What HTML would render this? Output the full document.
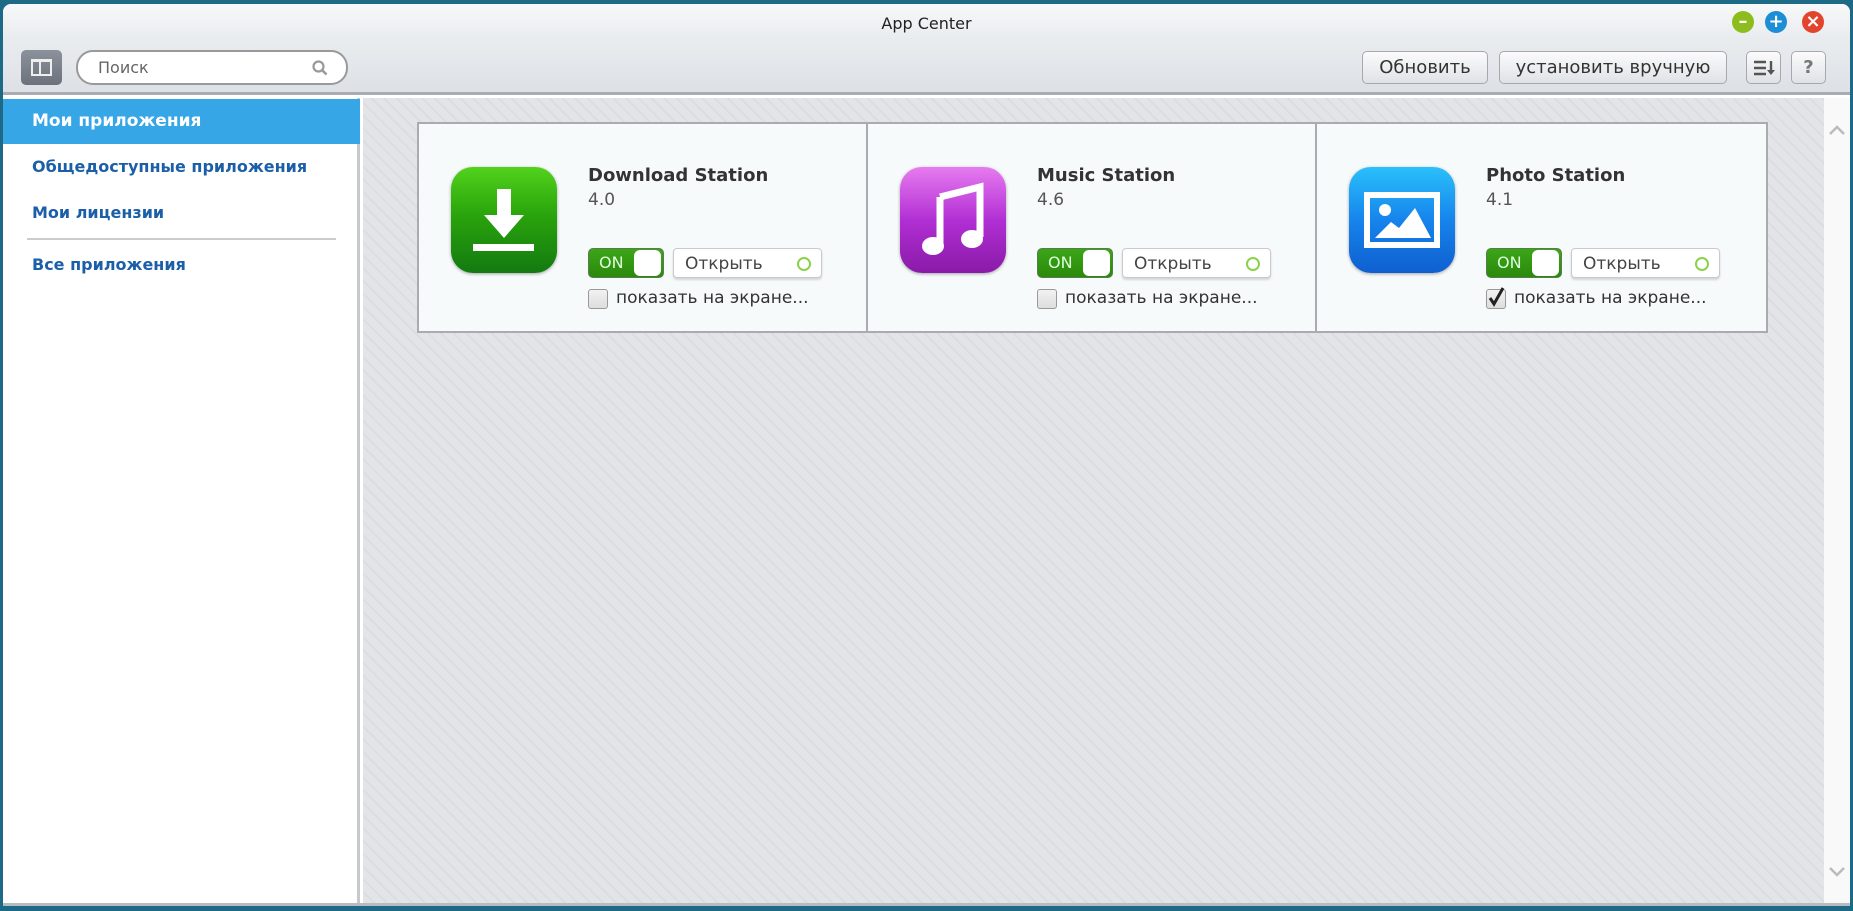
<!DOCTYPE html>
<html><head><meta charset="utf-8"><style>
*{margin:0;padding:0;box-sizing:border-box}
body{width:1853px;height:911px;overflow:hidden;background:#1d6a87;font-family:"DejaVu Sans","Liberation Sans",sans-serif;position:relative}
.win{position:absolute;left:3px;top:4px;width:1847px;height:902px;background:#fff;border-radius:8px 8px 0 0;overflow:hidden}
.tb{position:absolute;left:0;top:0;width:100%;height:91px;background:linear-gradient(#f7f8f9,#e9ecef 40%,#dde1e6);border-bottom:3px solid #a9adb3}
.title{position:absolute;top:10px;width:100%;text-align:center;font-size:16px;color:#222}
.wb{position:absolute;top:7px;width:22px;height:22px;border-radius:50%;color:#fff;font-weight:bold;font-size:18px;line-height:22px;text-align:center}
.btn{position:absolute;top:47px;height:33px;border:1px solid #a5a9ae;border-radius:5px;background:linear-gradient(#fbfbfc,#dfe2e6);font-size:18px;color:#333;text-align:center;line-height:31px}
.side{position:absolute;left:0;top:94px;width:357px;height:808px;background:#fff;border-right:3px solid #c7c9cc}
.si{position:absolute;left:29px;font-size:16px;font-weight:bold;color:#1a5fa8}
.cont{position:absolute;left:360px;top:94px;width:1461px;height:805px;background:#e3e4e7 repeating-linear-gradient(45deg,#e3e4e7 0 7px,#dcdde0 7px 9px)}
.scroll{position:absolute;left:1821px;top:94px;width:26px;height:805px;background:#f9f9f9}
.bot{position:absolute;left:0;top:899px;width:100%;height:3px;background:#b8bbbf}
.cards{position:absolute;left:414px;top:118px;width:1351px;height:211px;border:2px solid #a9abae;background:#f7fafb;display:flex}
.card{width:450px;height:100%;position:relative;border-right:2px solid #a9abae}
.card:last-child{border-right:none}
.ic{position:absolute;left:32px;top:43px;width:106px;height:106px;border-radius:22px;box-shadow:0 1px 3px rgba(0,0,0,.35)}
.nm{position:absolute;left:169px;top:41px;font-size:18px;font-weight:bold;color:#333}
.ver{position:absolute;left:169px;top:66px;font-size:17px;color:#555}
.tog{position:absolute;left:169px;top:124px;width:76px;height:30px;border-radius:5px;background:linear-gradient(#3ca617,#2a8a0c);border:1px solid #5a7a4f;color:#dfd;font-size:16px;line-height:28px;padding-left:10px}
.tog::after{content:"";position:absolute;right:2px;top:1px;width:27px;height:26px;border-radius:6px;background:#fff}
.open{position:absolute;left:254px;top:124px;width:149px;height:30px;border:1px solid #c8cacd;border-radius:4px;background:#fff;box-shadow:0 2px 2px rgba(0,0,0,.15);font-size:17px;color:#444;line-height:30px;padding-left:11px}
.open::after{content:"";position:absolute;right:10px;top:8px;width:10px;height:10px;border:2px solid #8bd24a;border-radius:50%}
.cb{position:absolute;left:169px;top:165px;width:20px;height:20px;border:1px solid #999;border-radius:3px;background:linear-gradient(#f2f2f2,#ddd)}
.cbl{position:absolute;left:197px;top:164px;font-size:17px;color:#333}
</style></head><body>
<div class="win">
 <div class="tb">
  <div class="title">App Center</div>
  <div class="wb" style="left:1729px;background:#8cbd1c">–</div>
  <div class="wb" style="left:1762px;background:#1c8ed6">+</div>
  <div class="wb" style="left:1799px;background:#e2452e">×</div>
  <div style="position:absolute;left:18px;top:46px;width:41px;height:35px;border-radius:5px;background:linear-gradient(#8b929b,#6b727b)">
   <div style="position:absolute;left:10px;top:9px;width:21px;height:17px;border:2px solid #eee;border-top-width:3px"></div>
   <div style="position:absolute;left:18px;top:10px;width:2px;height:15px;background:#eee"></div>
  </div>
  <div style="position:absolute;left:73px;top:46px;width:272px;height:35px;border:2px solid #999;border-radius:17px;background:#fff;font-size:16px;color:#666;line-height:31px;padding-left:20px">Поиск
   <svg style="position:absolute;right:18px;top:8px" width="16" height="16" viewBox="0 0 16 16"><circle cx="6.5" cy="6.5" r="5" fill="none" stroke="#999" stroke-width="2.2"/><path d="M10 10l4.5 4.5" stroke="#999" stroke-width="2.6"/></svg></div>
  <div class="btn" style="left:1359px;width:126px">Обновить</div>
  <div class="btn" style="left:1496px;width:228px">установить вручную</div>
  <div class="btn" style="left:1743px;width:35px"><svg width="24" height="20" viewBox="0 0 24 20" style="margin-top:6px"><path d="M2 4h12M2 10h12M2 16h12" stroke="#555" stroke-width="2.4"/><path d="M19 3v11" stroke="#555" stroke-width="2.4"/><path d="M15 12h8l-4 5z" fill="#555"/></svg></div>
  <div class="btn" style="left:1788px;width:35px;color:#777;font-weight:bold">?</div>
 </div>
 <div class="side">
  <div style="position:absolute;left:0;top:1px;width:357px;height:45px;background:#36a6e6"></div>
  <div class="si" style="top:13px;color:#fff;font-size:17px">Мои приложения</div>
  <div class="si" style="top:59px">Общедоступные приложения</div>
  <div class="si" style="top:105px">Мои лицензии</div>
  <div style="position:absolute;left:24px;top:140px;width:309px;height:2px;background:#ccc"></div>
  <div class="si" style="top:157px">Все приложения</div>
 </div>
 <div class="cont"></div>
 <div class="scroll">
  <svg style="position:absolute;left:5px;top:26px" width="16" height="12" viewBox="0 0 16 12"><path d="M1 10l7-7 7 7" fill="none" stroke="#bbb" stroke-width="2.5"/></svg>
  <svg style="position:absolute;left:5px;top:768px" width="16" height="12" viewBox="0 0 16 12"><path d="M1 2l7 7 7-7" fill="none" stroke="#bbb" stroke-width="2.5"/></svg>
 </div>
 <div class="bot"></div>
 <div class="cards">
  <div class="card">
   <div class="ic" style="background:linear-gradient(#52d21c,#2aa40c 45%,#137a10)">
    <svg width="106" height="106" viewBox="0 0 106 106"><path d="M46 22h14v26h13L53 71 33 48h13z" fill="#fff"/><rect x="22" y="77" width="61" height="7" fill="#fff"/></svg>
   </div>
   <div class="nm">Download Station</div><div class="ver">4.0</div>
   <div class="tog">ON</div><div class="open">Открыть</div>
   <div class="cb"></div><div class="cbl">показать на экране...</div>
  </div>
  <div class="card">
   <div class="ic" style="background:linear-gradient(#e77bf0,#b12fd4 50%,#8a1aa8)">
    <svg width="106" height="106" viewBox="0 0 106 106"><path d="M40 30l40-10v50" fill="none" stroke="#fff" stroke-width="7"/><path d="M40 30v48" stroke="#fff" stroke-width="7"/><ellipse cx="33" cy="79" rx="11" ry="9" fill="#fff"/><ellipse cx="72" cy="72" rx="11" ry="9" fill="#fff"/></svg>
   </div>
   <div class="nm">Music Station</div><div class="ver">4.6</div>
   <div class="tog">ON</div><div class="open">Открыть</div>
   <div class="cb"></div><div class="cbl">показать на экране...</div>
  </div>
  <div class="card">
   <div class="ic" style="background:linear-gradient(#2ac0fb,#1684ec 50%,#0f5fd0)">
    <svg width="106" height="106" viewBox="0 0 106 106"><rect x="18" y="28" width="70" height="50" fill="none" stroke="#fff" stroke-width="6"/><circle cx="36" cy="43" r="6" fill="#fff"/><path d="M26 71l16-16 8 6 16-20 16 30z" fill="#fff"/></svg>
   </div>
   <div class="nm">Photo Station</div><div class="ver">4.1</div>
   <div class="tog">ON</div><div class="open">Открыть</div>
   <div class="cb"><svg width="20" height="20" viewBox="0 0 20 20" style="position:absolute;left:0;top:-3px"><path d="M3 11l4 6 9-16" fill="none" stroke="#222" stroke-width="3"/></svg></div><div class="cbl">показать на экране...</div>
  </div>
 </div>
</div>
</body></html>
